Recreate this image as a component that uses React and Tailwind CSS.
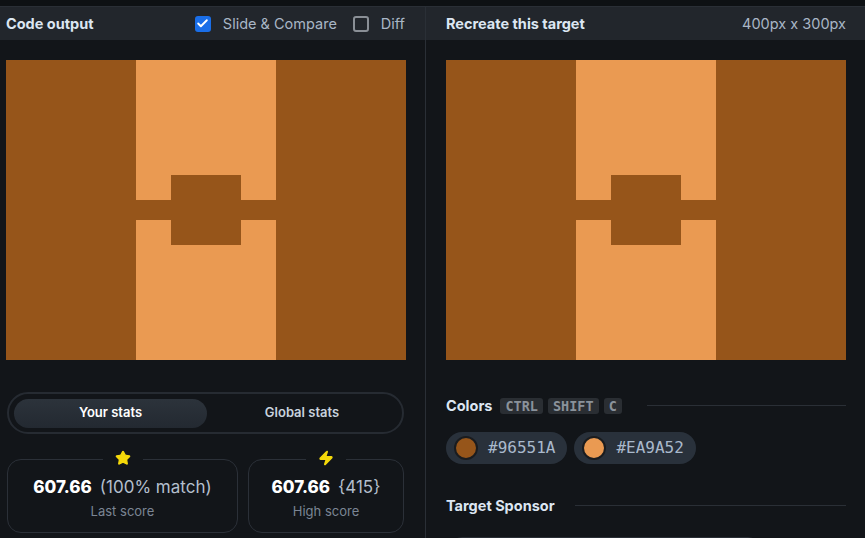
import { Check, Star, Zap } from "lucide-react";

const DARK = "#96551A";
const LIGHT = "#EA9A52";

const Target = () => (
  <svg width="400" height="300" viewBox="0 0 400 300" className="block">
    <rect width="400" height="300" fill={DARK} />
    <rect x="130" y="0" width="140" height="300" fill={LIGHT} />
    <rect x="130" y="140" width="140" height="20" fill={DARK} />
    <rect x="165" y="115" width="70" height="70" fill={DARK} />
  </svg>
);

const StatCard = ({ icon, value, extra, label, width }) => (
  <div className={`relative h-[74px] shrink-0 rounded-[14px] border border-[#2b3038] ${width}`}>
    <div className="absolute -top-[10px] left-1/2 flex -translate-x-1/2 justify-center bg-[#121519] px-[12px]">
      {icon}
    </div>
    <div className="flex h-full flex-col items-center justify-center pt-[4px]">
      <div className="flex items-baseline gap-[8px] text-[17px]">
        <span className="font-extrabold text-white">{value}</span>
        <span className="text-[#b4bfcd]">{extra}</span>
      </div>
      <div className="mt-[1px] text-[13px] text-[#7b8594]">{label}</div>
    </div>
  </div>
);

const ColorChip = ({ hex }) => (
  <div className="flex h-[32px] items-center gap-[10px] rounded-full bg-[#29313b] pl-[8px] pr-[12px]">
    <span className="h-[24px] w-[24px] rounded-full border-2 border-[#1a1c1f]" style={{ background: hex }} />
    <span className="font-['DejaVu_Sans_Mono',monospace] text-[16px] text-[#a9b9cc]">{hex}</span>
  </div>
);

const Kbd = ({ children }) => (
  <span className="rounded-[3px] bg-[#2a2e33] px-[5px] font-['DejaVu_Sans_Mono',monospace] text-[13.5px] font-bold leading-[16px] text-[#8a929b]">
    {children}
  </span>
);

export default function App() {
  return (
    <div className="h-[538px] w-[865px] overflow-hidden bg-[#121519] font-['Inter',sans-serif]">
      <div className="h-[6px] bg-[#0e1114]" />
      <div className="flex h-[532px] border-t border-[#2a2f36]">
        <div className="w-[426px] shrink-0 border-r border-[#2a2f36]">
          <div className="flex h-[33px] items-center justify-between bg-[#22262c] pl-[6px] pr-[20px]">
            <span className="text-[14.5px] font-bold text-[#dce6f2]">Code output</span>
            <div className="flex items-center text-[14.5px] text-[#a9b6c6]">
              <span className="flex h-[16px] w-[16px] items-center justify-center rounded-[3px] bg-[#1a6ee8]">
                <Check size={13} strokeWidth={3.5} color="white" />
              </span>
              <span className="ml-[12px]">Slide &amp; Compare</span>
              <span className="ml-[16px] h-[16px] w-[16px] rounded-[3px] border-2 border-[#8a8f96]" />
              <span className="ml-[12px]">Diff</span>
            </div>
          </div>
          <div className="ml-[6px] mt-[20px]">
            <Target />
          </div>
          <div className="mx-[7px] mt-[32px] flex h-[42px] w-[397px] items-center rounded-full border-2 border-[#262b32] px-[5px]">
            <div className="flex h-[29px] w-[193px] items-center justify-center rounded-full bg-gradient-to-b from-[#2c333b] to-[#232931] text-[13px] font-semibold text-white">
              Your stats
            </div>
            <div className="flex flex-1 items-center justify-center text-[13px] font-semibold text-[#c8d2de]">
              Global stats
            </div>
          </div>
          <div className="mt-[25px] flex gap-[10px] px-[7px]">
            <StatCard
              width="w-[231px]"
              icon={<Star size={16} fill="#f5d90a" color="#f5d90a" />}
              value="607.66"
              extra="(100% match)"
              label="Last score"
            />
            <StatCard
              width="w-[156px]"
              icon={<Zap size={16} fill="#f5d90a" color="#f5d90a" />}
              value="607.66"
              extra="{415}"
              label="High score"
            />
          </div>
        </div>
        <div className="min-w-0 flex-1 pl-[20px] pr-[19px]">
          <div className="-ml-[20px] -mr-[19px] flex h-[33px] items-center justify-between bg-[#22262c] pl-[20px] pr-[19px]">
            <span className="text-[14.5px] font-bold text-[#dce6f2]">Recreate this target</span>
            <span className="text-[14.5px] text-[#a9b6c6]">400px x 300px</span>
          </div>
          <div className="mt-[20px]">
            <Target />
          </div>
          <div className="mt-[35px] flex items-center gap-[5px]">
            <span className="mr-[3px] text-[14.5px] font-bold text-[#dce6f2]">Colors</span>
            <Kbd>CTRL</Kbd>
            <Kbd>SHIFT</Kbd>
            <Kbd>C</Kbd>
            <div className="ml-[20px] h-px flex-1 bg-[#2a2f36]" />
          </div>
          <div className="mt-[15px] flex gap-[7px]">
            <ColorChip hex="#96551A" />
            <ColorChip hex="#EA9A52" />
          </div>
          <div className="mt-[31px] flex items-center">
            <span className="text-[14.5px] font-bold text-[#dce6f2]">Target Sponsor</span>
            <div className="ml-[20px] h-px flex-1 bg-[#2a2f36]" />
          </div>
          <div className="mx-[4px] mt-[20px] h-[40px] w-[310px] rounded-[12px] border border-[#2a2f36]" />
        </div>
      </div>
    </div>
  );
}
